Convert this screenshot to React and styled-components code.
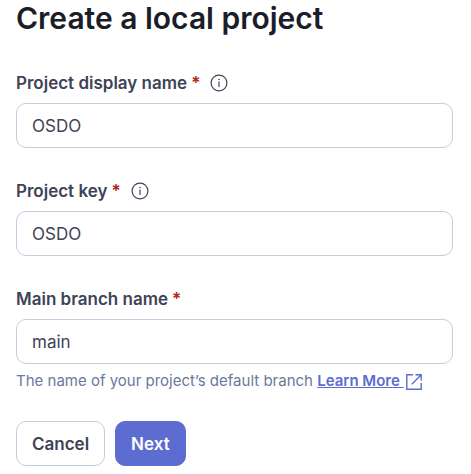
import React, { useState } from 'react';
import styled, { createGlobalStyle } from 'styled-components';

const GlobalStyle = createGlobalStyle`
    * {
        box-sizing: border-box;
    }
    body {
        margin: 0;
        background-color: #ffffff;
        font-family: Inter, "Liberation Sans", sans-serif;
        color: #3e4357;
    }
`;

const Form = styled.form`
    padding: 0 18px 8px 16px;
`;

const Title = styled.h1`
    margin: 0 0 33px;
    font-size: 30px;
    line-height: 36px;
    font-weight: 600;
    color: #1b1d29;
`;

const Field = styled.div`
    margin-bottom: 29px;
`;

const LabelRow = styled.div`
    display: flex;
    align-items: center;
    gap: 10px;
    height: 28px;
    margin-bottom: 6px;
`;

const Label = styled.label`
    font-size: 17px;
    line-height: 28px;
    font-weight: 600;
`;

const Required = styled.span`
    margin-left: 4px;
    color: #b42318;
`;

const InfoButton = styled.button`
    display: flex;
    padding: 0;
    border: none;
    background: none;
    color: #3e4357;
    cursor: pointer;
`;

const Input = styled.input`
    display: block;
    width: 100%;
    height: 45px;
    padding: 0 15px;
    border: 1px solid #c5cddf;
    border-radius: 10px;
    background-color: #ffffff;
    color: #3e4357;
    font-family: inherit;
    font-size: 17px;
`;

const Hint = styled.div`
    margin-top: 6px;
    font-size: 15px;
    line-height: 22px;
    color: #697a9b;
`;

const LearnMore = styled.a`
    color: #5d6cd0;
    font-weight: 600;

    svg {
        margin-left: 2px;
        vertical-align: text-bottom;
    }
`;

const Actions = styled.div`
    display: flex;
    gap: 10px;
`;

const Button = styled.button`
    height: 45px;
    padding: 0 15px;
    border: 1px solid ${({ $primary }) => ($primary ? '#5d6cd0' : '#c5cddf')};
    border-radius: 10px;
    background-color: ${({ $primary }) => ($primary ? '#5d6cd0' : '#ffffff')};
    color: ${({ $primary }) => ($primary ? '#ffffff' : '#3e4357')};
    font-family: inherit;
    font-size: 17px;
    font-weight: 600;
    cursor: pointer;
`;

const InfoIcon = () => (
    <svg width="18" height="18" viewBox="0 0 18 18" fill="none" stroke="currentColor" strokeWidth="1.2">
        <circle cx="9" cy="9" r="7.9" />
        <path d="M9 7.5v5.5" />
        <circle cx="9" cy="5.5" r="0.8" fill="currentColor" stroke="none" />
    </svg>
);

const OpenIcon = () => (
    <svg width="16" height="16" viewBox="0 0 16 16" fill="none" stroke="currentColor" strokeWidth="1.4">
        <path d="M7 0.8H0.8v14.4h14.4V9M9.5 0.8h5.7v5.7M15.2 0.8L5.8 10.2" />
    </svg>
);

const TextField = ({ id, label, info, value, onChange, children }) => (
    <Field>
        <LabelRow>
            <Label htmlFor={id}>{label}<Required>*</Required></Label>
            {info ? <InfoButton type="button" aria-label="Info"><InfoIcon /></InfoButton> : null}
        </LabelRow>
        <Input id={id} type="text" required value={value} onChange={onChange} />
        {children}
    </Field>
);

const App = () => {
    const [name, setName] = useState('OSDO');
    const [key, setKey] = useState('OSDO');
    const [branch, setBranch] = useState('main');

    return (
        <>
            <GlobalStyle />
            <Form onSubmit={(e) => e.preventDefault()}>
                <Title>Create a local project</Title>
                <TextField id="name" label="Project display name" info value={name} onChange={(e) => setName(e.target.value)} />
                <TextField id="key" label="Project key" info value={key} onChange={(e) => setKey(e.target.value)} />
                <TextField id="branch" label="Main branch name" value={branch} onChange={(e) => setBranch(e.target.value)}>
                    <Hint>
                        The name of your project’s default branch{' '}
                        <LearnMore href="#">Learn More <OpenIcon /></LearnMore>
                    </Hint>
                </TextField>
                <Actions>
                    <Button type="button">Cancel</Button>
                    <Button type="submit" $primary>Next</Button>
                </Actions>
            </Form>
        </>
    );
};

export default App;
